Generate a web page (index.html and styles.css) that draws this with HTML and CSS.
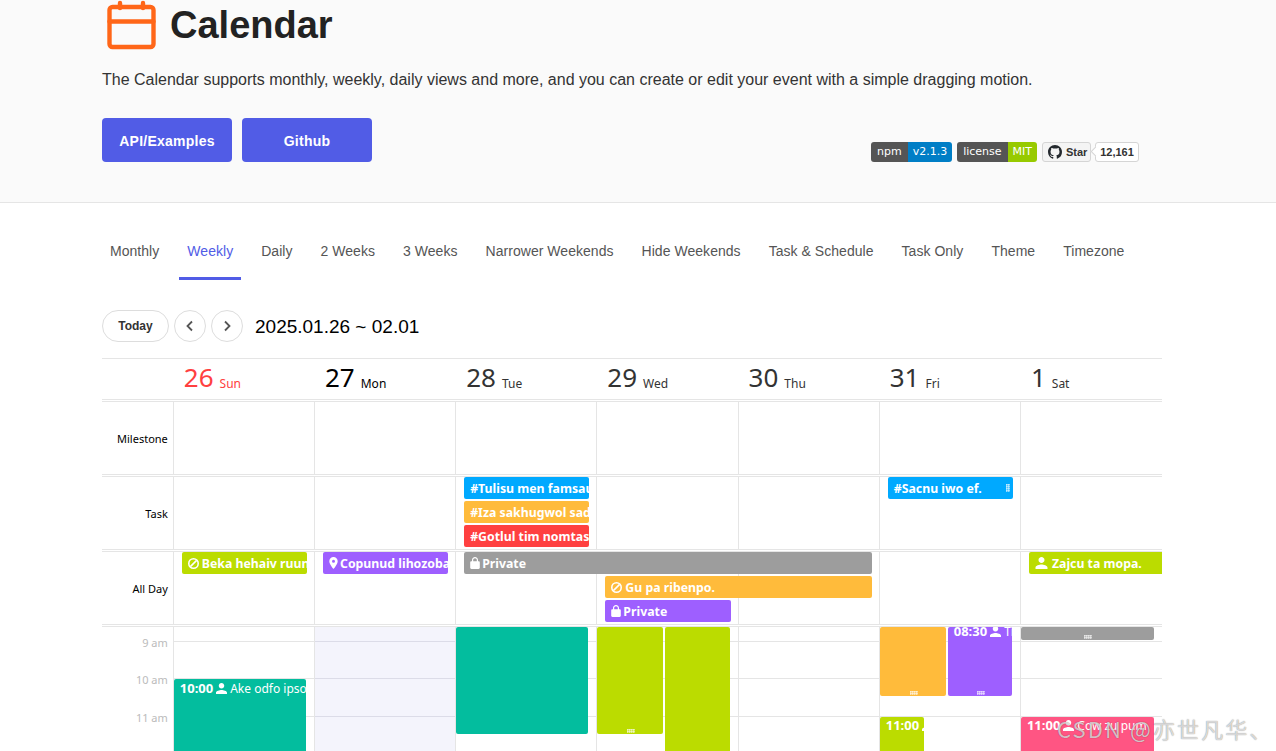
FILE: index.html
```html
<!DOCTYPE html>
<html>
<head>
    <title>Calendar</title>
    <link rel="stylesheet" href="styles.css">
</head>
<body>
    <svg class="defs" width="0" height="0">
        <symbol id="i-person" viewBox="4 4 16 16"><path d="M12 12c2.21 0 4-1.79 4-4s-1.79-4-4-4-4 1.79-4 4 1.79 4 4 4zm0 2c-2.67 0-8 1.34-8 4v2h16v-2c0-2.66-5.33-4-8-4z"/></symbol>
        <symbol id="i-lock" viewBox="4 2 16 20"><path d="M18 9h-1V7c0-2.76-2.24-5-5-5S7 4.24 7 7v2H6c-1.1 0-2 .9-2 2v9c0 1.1.9 2 2 2h12c1.1 0 2-.9 2-2v-9c0-1.1-.9-2-2-2zm-3 0H9V7c0-1.66 1.34-3 3-3s3 1.34 3 3v2z"/></symbol>
        <symbol id="i-pin" viewBox="5 2 14 20"><path d="M12 2C8.13 2 5 5.13 5 9c0 5.25 7 13 7 13s7-7.75 7-13c0-3.87-3.13-7-7-7zm0 9.5a2.5 2.5 0 010-5 2.5 2.5 0 010 5z"/></symbol>
        <symbol id="i-ban" viewBox="1.5 1.5 21 21"><circle cx="12" cy="12" r="9" fill="none" stroke="#fff" stroke-width="3"/><path d="M6 18L18 6" stroke="#fff" stroke-width="3"/></symbol>
    </svg>

    <header class="hero">
        <div class="brand">
            <svg class="logo" width="50" height="50" viewBox="0 0 50 50" fill="none" stroke="#ff6618" stroke-width="4.4" stroke-linecap="round">
                <rect x="3.5" y="7" width="44" height="40" rx="3"/>
                <path d="M3.5 21.5h44M14 3v5M37 3v5"/>
            </svg>
            <h1>Calendar</h1>
        </div>
        <p class="intro">The Calendar supports monthly, weekly, daily views and more, and you can create or edit your event with a simple dragging motion.</p>
        <div class="hero-actions">
            <a class="btn">API/Examples</a>
            <a class="btn">Github</a>
            <div class="badges">
                <span class="badge"><span class="badge-key">npm</span><span class="badge-val blue">v2.1.3</span></span>
                <span class="badge"><span class="badge-key">license</span><span class="badge-val green">MIT</span></span>
                <span class="gh-star">
                    <svg width="14" height="14" viewBox="0 0 16 16" fill="#24292e"><path d="M8 0C3.58 0 0 3.58 0 8c0 3.54 2.29 6.53 5.47 7.59.4.07.55-.17.55-.38 0-.19-.01-.82-.01-1.49-2.01.37-2.53-.49-2.69-.94-.09-.23-.48-.94-.82-1.13-.28-.15-.68-.52-.01-.53.63-.01 1.08.58 1.23.82.72 1.21 1.87.87 2.33.66.07-.52.28-.87.51-1.07-1.78-.2-3.64-.89-3.64-3.95 0-.87.31-1.59.82-2.15-.08-.2-.36-1.02.08-2.12 0 0 .67-.21 2.2.82.64-.18 1.32-.27 2-.27.68 0 1.36.09 2 .27 1.53-1.04 2.2-.82 2.2-.82.44 1.1.16 1.92.08 2.12.51.56.82 1.27.82 2.15 0 3.07-1.87 3.75-3.65 3.95.29.25.54.73.54 1.48 0 1.07-.01 1.93-.01 2.2 0 .21.15.46.55.38A8.013 8.013 0 0016 8c0-4.42-3.58-8-8-8z"/></svg>
                    Star
                </span>
                <span class="gh-count">12,161</span>
            </div>
        </div>
    </header>

    <main class="content">
        <nav class="tabs">
            <a class="tab">Monthly</a>
            <a class="tab active">Weekly</a>
            <a class="tab">Daily</a>
            <a class="tab">2 Weeks</a>
            <a class="tab">3 Weeks</a>
            <a class="tab">Narrower Weekends</a>
            <a class="tab">Hide Weekends</a>
            <a class="tab">Task &amp; Schedule</a>
            <a class="tab">Task Only</a>
            <a class="tab">Theme</a>
            <a class="tab">Timezone</a>
        </nav>

        <div class="toolbar">
            <button class="today">Today</button>
            <button class="nav-btn"><svg width="14" height="14" viewBox="0 0 14 14" fill="none" stroke="#555" stroke-width="1.8"><path d="M9 2.5L4.5 7 9 11.5"/></svg></button>
            <button class="nav-btn"><svg width="14" height="14" viewBox="0 0 14 14" fill="none" stroke="#555" stroke-width="1.8"><path d="M5 2.5L9.5 7 5 11.5"/></svg></button>
            <span class="range">2025.01.26 ~ 02.01</span>
        </div>

        <div class="calendar">
            <div class="week-head">
                <div class="day sun"><b>26</b><span>Sun</span></div>
                <div class="day today-col"><b>27</b><span>Mon</span></div>
                <div class="day"><b>28</b><span>Tue</span></div>
                <div class="day"><b>29</b><span>Wed</span></div>
                <div class="day"><b>30</b><span>Thu</span></div>
                <div class="day"><b>31</b><span>Fri</span></div>
                <div class="day"><b>1</b><span>Sat</span></div>
            </div>
            <div class="splitter"></div>

            <div class="panel">
                <div class="panel-label">Milestone</div>
                <div class="cell c1"></div><div class="cell c2"></div><div class="cell c3"></div><div class="cell c4"></div><div class="cell c5"></div><div class="cell c6"></div><div class="cell c7"></div>
            </div>
            <div class="splitter"></div>

            <div class="panel">
                <div class="panel-label">Task</div>
                <div class="cell c1"></div><div class="cell c2"></div><div class="cell c3"></div><div class="cell c4"></div><div class="cell c5"></div><div class="cell c6"></div><div class="cell c7"></div>
                <div class="ev blue c3 r1">#Tulisu men famsaumfo</div>
                <div class="ev orange c3 r2">#Iza sakhugwol sadjuzo</div>
                <div class="ev red c3 r3">#Gotlul tim nomtas.</div>
                <div class="ev blue c6 r1">#Sacnu iwo ef.<i class="grip-side"></i></div>
            </div>
            <div class="splitter"></div>

            <div class="panel">
                <div class="panel-label">All Day</div>
                <div class="cell c1"></div><div class="cell c2"></div><div class="cell c3"></div><div class="cell c4"></div><div class="cell c5"></div><div class="cell c6"></div><div class="cell c7"></div>
                <div class="ev lime c1 r1"><svg class="ico ban"><use href="#i-ban"/></svg>Beka hehaiv ruunvo</div>
                <div class="ev purple c2 r1"><svg class="ico pin"><use href="#i-pin"/></svg>Copunud lihozobatu</div>
                <div class="ev gray c3-5 r1"><svg class="ico lock"><use href="#i-lock"/></svg>Private</div>
                <div class="ev orange c4-5 r2"><svg class="ico ban"><use href="#i-ban"/></svg>Gu pa ribenpo.</div>
                <div class="ev purple c4 r3"><svg class="ico lock"><use href="#i-lock"/></svg>Private</div>
                <div class="ev lime c7 r1 open-end"><svg class="ico person"><use href="#i-person"/></svg>Zajcu ta mopa.</div>
            </div>
            <div class="splitter"></div>

            <div class="timegrid">
                <div class="hours">
                    <div class="hour">9 am</div>
                    <div class="hour">10 am</div>
                    <div class="hour">11 am</div>
                </div>
                <div class="tcol">
                    <div class="tev teal sun-ev"><b>10:00</b><svg class="ico person"><use href="#i-person"/></svg>Ake odfo ipsoka</div>
                </div>
                <div class="tcol tinted"></div>
                <div class="tcol">
                    <div class="tev teal tue-ev"></div>
                </div>
                <div class="tcol">
                    <div class="tev lime wed-a"><i class="grip"></i></div>
                    <div class="tev lime wed-b"></div>
                </div>
                <div class="tcol"></div>
                <div class="tcol">
                    <div class="tev orange fri-a"><i class="grip"></i></div>
                    <div class="tev purple fri-b"><div class="clip-top"><b>08:30</b><svg class="ico person"><use href="#i-person"/></svg>Tiwbe</div><i class="grip"></i></div>
                    <div class="tev lime fri-c"><b>11:00</b><svg class="ico person"><use href="#i-person"/></svg>Lo</div>
                </div>
                <div class="tcol">
                    <div class="tev gray sat-a"><i class="grip"></i></div>
                    <div class="tev pink sat-b"><b>11:00</b><svg class="ico person"><use href="#i-person"/></svg>Cow zu pum</div>
                </div>
            </div>
        </div>
    </main>

    <div class="watermark">CSDN @亦世凡华、</div>
</body>
</html>
```

FILE: styles.css
```css
html, body {
    height: 751px;
    overflow: hidden;
}
body {
    margin: 0;
    font-family: "Liberation Sans", Arial, sans-serif;
    color: #333;
    background: #fff;
}
.defs {
    position: absolute;
}

/* top banner */
.hero {
    background: #fafafa;
    border-bottom: 1px solid #e5e5e5;
    padding: 0 137px 0 102px;
    height: 202px;
}
.brand {
    display: flex;
    align-items: center;
    height: 50px;
    padding-left: 4px;
}
.brand h1 {
    margin: 0 0 0 14px;
    font-size: 38px;
    line-height: 50px;
    font-weight: bold;
    color: #222;
}
.intro {
    margin: 18px 0 0;
    font-size: 16px;
    line-height: 24px;
    color: #333;
}
.hero-actions {
    display: flex;
    align-items: flex-end;
    margin-top: 26px;
}
.btn {
    display: block;
    width: 130px;
    height: 44px;
    margin-right: 10px;
    line-height: 46px;
    text-align: center;
    font-size: 14px;
    letter-spacing: 0.25px;
    font-weight: bold;
    color: #fff;
    background: #515ce6;
    border-radius: 4px;
}
.badges {
    display: flex;
    align-items: center;
    margin-left: auto;
    height: 20px;
    font-family: "DejaVu Sans", sans-serif;
    font-size: 11px;
}
.badge {
    display: flex;
    height: 20px;
    line-height: 20px;
    margin-right: 5px;
    border-radius: 3px;
    overflow: hidden;
    color: #fff;
}
.badge-key {
    background: #555;
    padding: 0 6px;
}
.badge-val {
    padding: 0 5px;
}
.badge-val.blue {
    background: #007ec6;
}
.badge-val.green {
    background: #97ca00;
}
.gh-star, .gh-count {
    display: flex;
    align-items: center;
    box-sizing: border-box;
    height: 20px;
    font-family: "Liberation Sans", Arial, sans-serif;
    font-weight: bold;
    font-size: 11px;
    color: #333;
    border: 1px solid #d5d5d5;
    border-radius: 3px;
}
.gh-star {
    gap: 4px;
    width: 49px;
    padding-left: 5px;
    background: #f4f4f4;
}
.gh-count {
    position: relative;
    justify-content: center;
    width: 44px;
    margin-left: 4px;
    background: #fff;
}
.gh-count::before {
    content: "";
    position: absolute;
    left: -4px;
    top: 5px;
    width: 6px;
    height: 6px;
    background: #fff;
    border-left: 1px solid #d5d5d5;
    border-bottom: 1px solid #d5d5d5;
    transform: rotate(45deg);
}

/* main area */
.content {
    padding: 20px 114px 0 102px;
}
.tabs {
    display: flex;
    gap: 12px;
}
.tab {
    padding: 20px 8px 18px;
    line-height: 16px;
    font-size: 14px;
    letter-spacing: 0.04px;
    color: #555;
    border-bottom: 3px solid transparent;
}
.tab.active {
    color: #515ce6;
    border-bottom-color: #515ce6;
}
.toolbar {
    display: flex;
    align-items: center;
    margin-top: 30px;
}
.today, .nav-btn {
    height: 32px;
    padding: 0;
    font-family: inherit;
    background: #fff;
    border: 1px solid #ddd;
    border-radius: 16px;
}
.today {
    width: 67px;
    font-size: 12px;
    font-weight: bold;
    color: #333;
}
.nav-btn {
    display: flex;
    align-items: center;
    justify-content: center;
    width: 32px;
    margin-left: 5px;
}
.range {
    margin: 2px 0 0 12px;
    font-size: 19px;
    color: #000;
}

/* calendar */
.calendar {
    margin-top: 16px;
    border-top: 1px solid #e5e5e5;
    font-family: "Noto Sans", sans-serif;
}
.week-head {
    display: grid;
    grid-template-columns: 70.8px repeat(6, 141.2px) 1fr;
    height: 40px;
}
.day {
    padding: 0 0 0 11px;
    line-height: 37px;
    color: #333;
    white-space: nowrap;
}
.day:first-child {
    grid-column: 2;
}
.day b {
    font-weight: normal;
    font-size: 26px;
}
.day span {
    position: relative;
    top: 1px;
    margin-left: 6px;
    font-size: 12px;
}
.day.sun {
    color: #ff4040;
}
.day.today-col {
    color: #000;
}
.splitter {
    height: 3px;
    box-sizing: border-box;
    border-top: 1px solid #e5e5e5;
    border-bottom: 1px solid #e5e5e5;
}
.panel {
    display: grid;
    grid-template-columns: 70.8px repeat(6, 141.2px) 1fr;
    grid-template-rows: repeat(3, 24px);
    height: 72px;
    overflow: hidden;
}
.panel-label {
    grid-column: 1;
    grid-row: 1 / 4;
    align-self: center;
    padding: 0 5px 0 0;
    text-align: right;
    font-size: 11px;
    color: #000;
}
.cell {
    grid-row: 1 / 4;
    border-left: 1px solid #e5e5e5;
}
.c1 { grid-column: 2; }
.c2 { grid-column: 3; }
.c3 { grid-column: 4; }
.c4 { grid-column: 5; }
.c5 { grid-column: 6; }
.c6 { grid-column: 7; }
.c7 { grid-column: 8; }
.c3-5 { grid-column: 4 / 7; }
.c4-5 { grid-column: 5 / 7; }
.r1 { grid-row: 1; }
.r2 { grid-row: 2; }
.r3 { grid-row: 3; }

.ev {
    position: relative;
    display: flex;
    align-items: center;
    height: 22px;
    margin: 0 7px 0 9px;
    padding-left: 6px;
    font-size: 12.3px;
    font-weight: bold;
    color: #fff;
    white-space: nowrap;
    overflow: hidden;
    border-radius: 2px;
}
.ev.open-end {
    margin-right: 0;
    border-radius: 2px 0 0 2px;
}
.ico {
    flex: none;
    fill: #fff;
}
.ico.ban {
    width: 11px;
    height: 11px;
    margin-right: 3px;
}
.ico.pin {
    width: 9px;
    height: 12px;
    margin-right: 2px;
}
.ico.lock {
    width: 10px;
    height: 12px;
    margin-right: 2px;
}
.ico.person {
    width: 13px;
    height: 12px;
    margin-right: 4px;
}
.blue { background: #00a9ff; }
.orange { background: #ffbb3b; }
.red { background: #ff4040; }
.lime { background: #bbdc00; }
.purple { background: #9e5fff; }
.gray { background: #9d9d9d; }
.teal { background: #03bd9e; }
.pink { background: #ff5583; }

/* little lattice handles for resizing */
.grip, .grip-side {
    position: absolute;
    background-color: rgba(255, 255, 255, 0.3);
    background-image:
        linear-gradient(90deg, rgba(255, 255, 255, 0.4) 1px, transparent 1px),
        linear-gradient(rgba(255, 255, 255, 0.4) 1px, transparent 1px);
    background-size: 2px 2px;
}
.grip-side {
    right: 3px;
    top: 7px;
    width: 4px;
    height: 8px;
}
.grip {
    left: 50%;
    bottom: 1px;
    width: 8px;
    height: 4px;
    margin-left: -3px;
}

.timegrid {
    display: grid;
    grid-template-columns: 70.8px repeat(6, 141.2px) 1fr;
    height: 124px;
    overflow: hidden;
}
.hours {
    padding: 7px 5px 0 0;
    text-align: right;
    font-size: 11px;
    color: #bbb;
}
.hour {
    height: 37px;
    line-height: 18px;
}
.hour:nth-child(2) {
    height: 38px;
}
.tcol {
    --line: #e5e5e5;
    position: relative;
    border-left: 1px solid #e5e5e5;
    background:
        linear-gradient(var(--line), var(--line)) 0 14px / 100% 1px no-repeat,
        linear-gradient(var(--line), var(--line)) 0 51px / 100% 1px no-repeat,
        linear-gradient(var(--line), var(--line)) 0 89px / 100% 1px no-repeat;
}
.tcol.tinted {
    --line: #dcdce8;
    background-color: #f4f4fc;
}
.tev {
    position: absolute;
    box-sizing: border-box;
    padding: 1px 0 0 6px;
    font-size: 12px;
    line-height: 17px;
    color: #fff;
    white-space: nowrap;
    overflow: hidden;
    border-radius: 2px;
}
.tev b {
    font-weight: bold;
    font-size: 13px;
    margin-right: 2px;
}
.tev .ico.person {
    width: 13px;
    height: 11px;
    margin-right: 2px;
    vertical-align: -1px;
}
.clip-top {
    margin-top: -5px;
}
.sun-ev { left: 0; width: 132px; top: 52px; height: 90px; }
.tue-ev { left: 0; width: 132px; top: 0; height: 107px; }
.wed-a { left: 0; width: 66px; top: 0; height: 107px; }
.wed-b { left: 68px; width: 65px; top: 0; height: 140px; }
.fri-a { left: 0; width: 66px; top: 0; height: 69px; }
.fri-b { left: 68px; width: 64px; top: 0; height: 69px; }
.fri-c { left: 0; width: 44px; top: 90px; height: 60px; padding-top: 0; }
.sat-a { left: 0; width: 133px; top: 0; height: 13px; }
.sat-b { left: 0; width: 133px; top: 90px; height: 60px; padding-top: 0; }

.watermark {
    position: absolute;
    left: 1057px;
    top: 713px;
    font-family: "Noto Sans CJK SC", "Noto Sans", sans-serif;
    font-size: 22px;
    letter-spacing: 2.1px;
    line-height: 30px;
    white-space: nowrap;
    color: rgba(255, 255, 255, 0.7);
    text-shadow: 0 0 1px rgba(0, 0, 0, 0.55);
}
```
